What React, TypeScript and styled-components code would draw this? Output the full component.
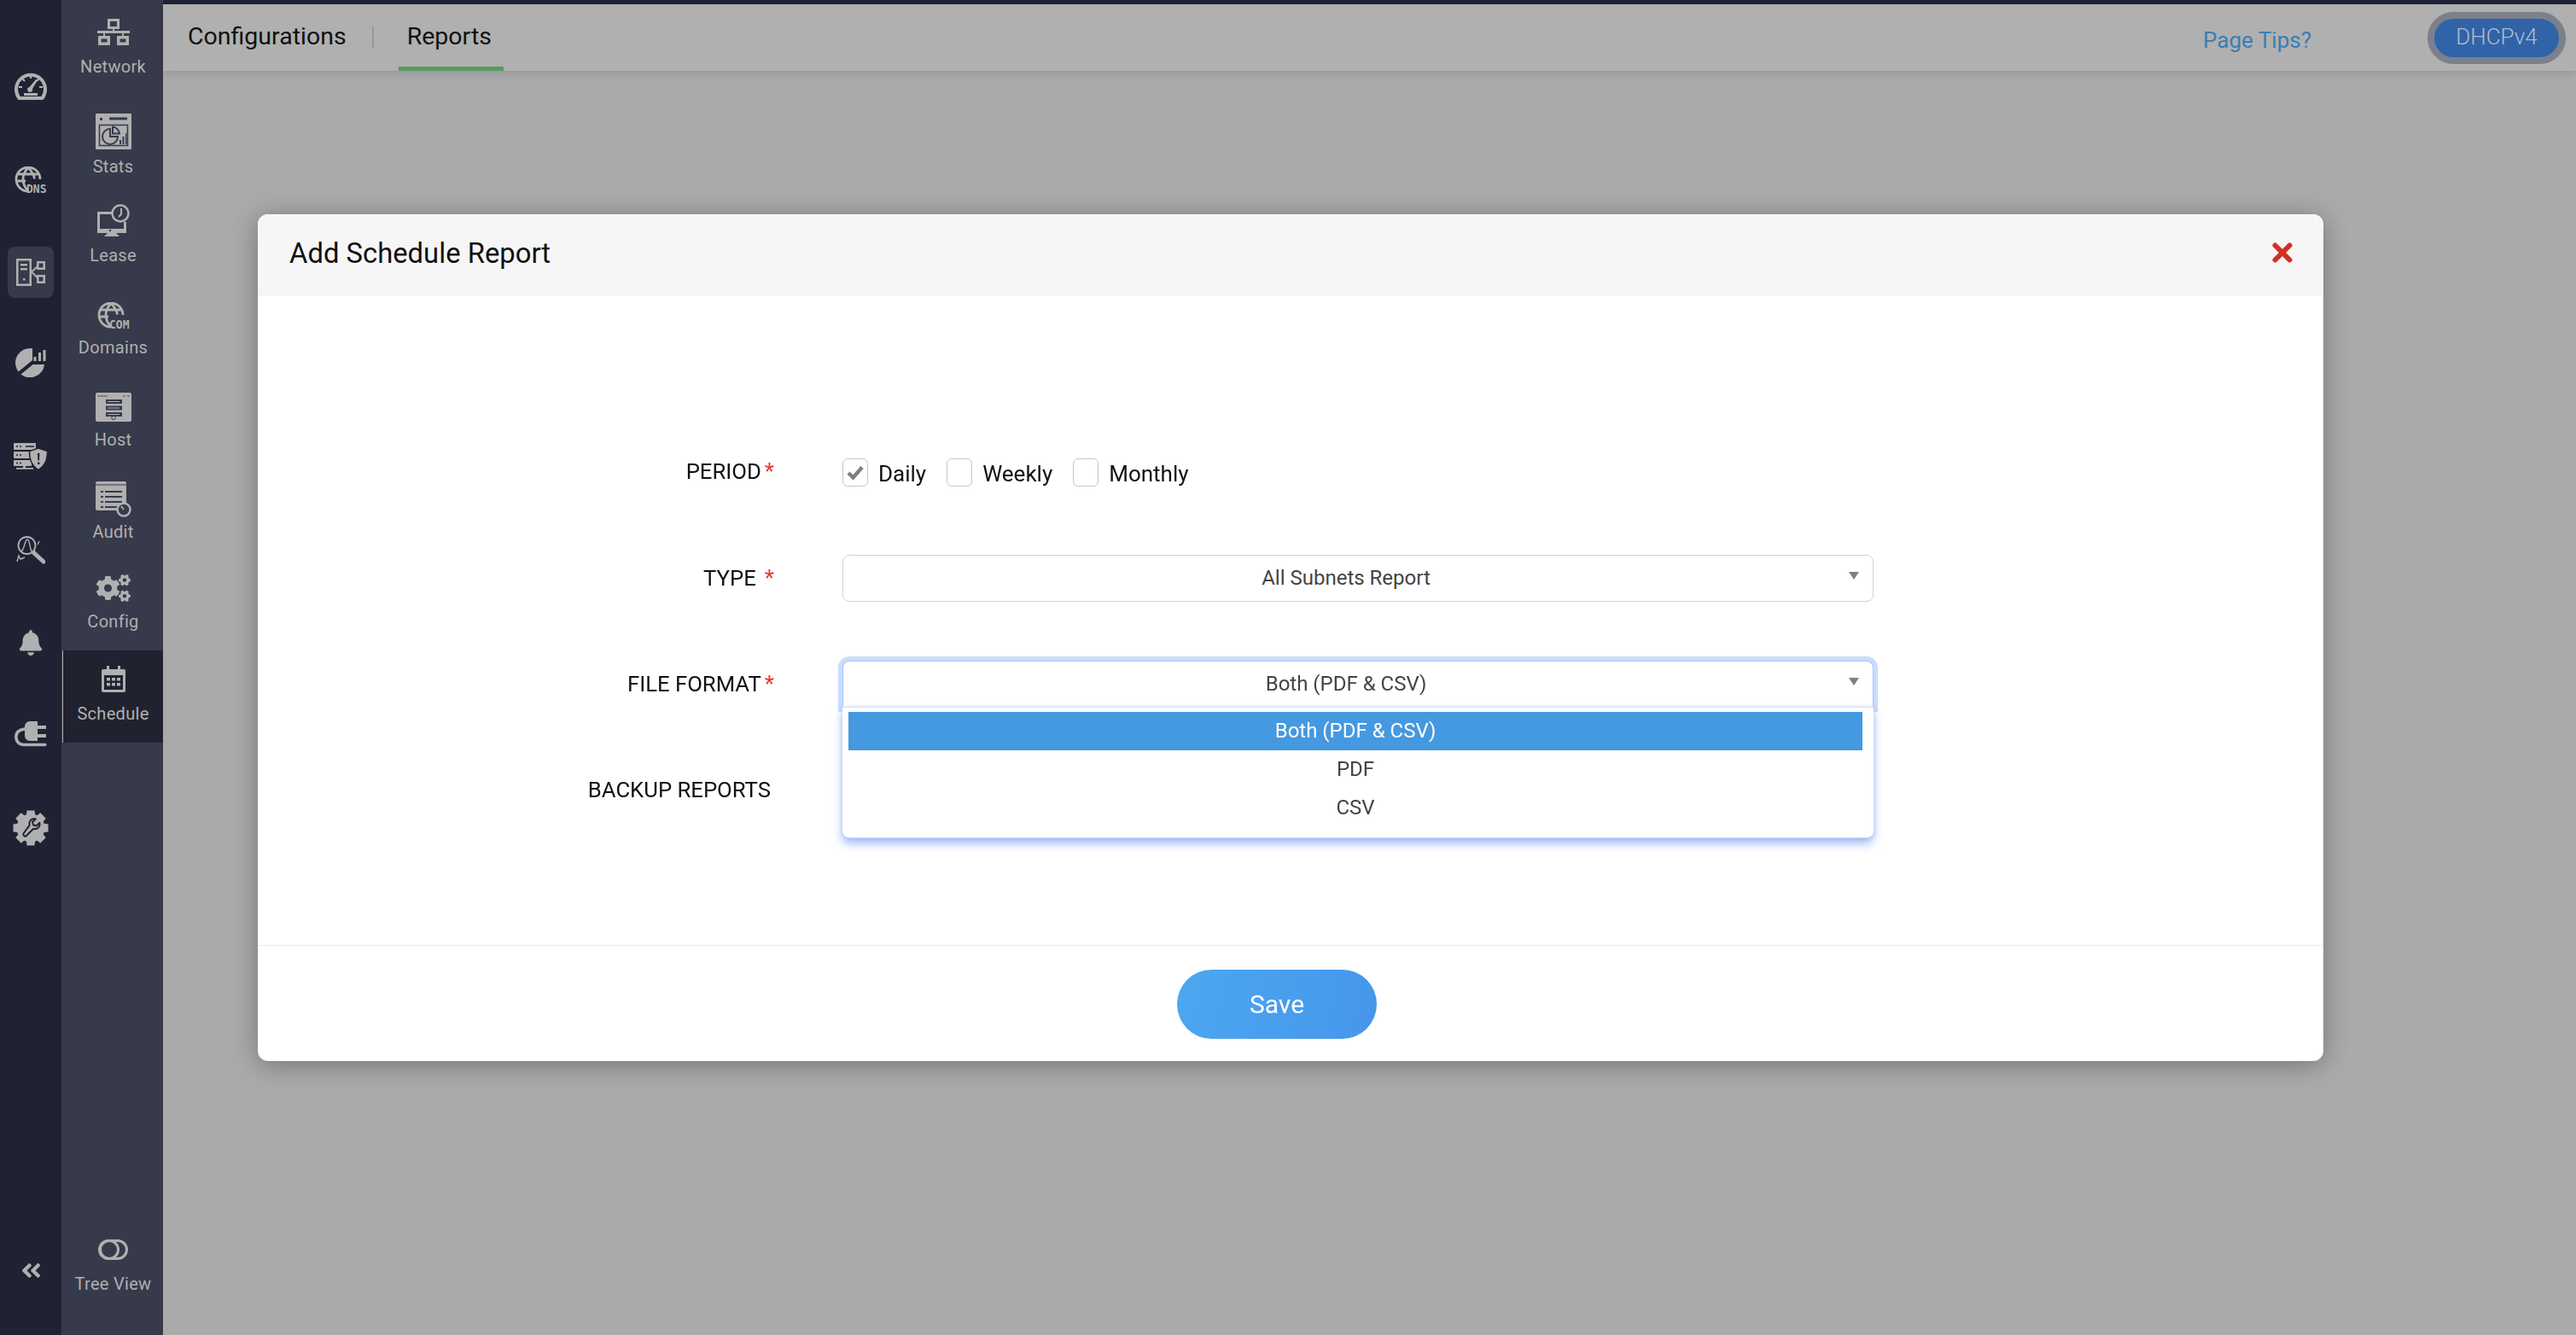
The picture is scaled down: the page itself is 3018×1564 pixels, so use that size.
import React from 'react';
import styled, { createGlobalStyle } from 'styled-components';
import { FaBell, FaCogs, FaAngleDoubleLeft } from 'react-icons/fa';

const GlobalStyle = createGlobalStyle`
  html, body {
    margin: 0;
    height: 100%;
    background: #aaaaaa;
    font-family: Roboto, "Liberation Sans", sans-serif;
  }
  * { box-sizing: border-box; }
`;

const Page = styled.div`
  display: flex;
  height: 1564px;
  overflow: hidden;
`;

const Rail = styled.nav`
  display: flex;
  flex-direction: column;
  align-items: center;
  width: 72px;
  flex: none;
  background: #1f2233;
  color: #b0b0b0;
  padding-top: 70px;
`;

const RailSlot = styled.div<{ $h: number; $active?: boolean }>`
  height: 60px;
  width: 54px;
  flex: none;
  margin-bottom: ${({ $h }) => $h - 60}px;
  display: flex;
  align-items: center;
  justify-content: center;
  border-radius: 8px;
  background: ${({ $active }) => ($active ? '#373a4a' : 'transparent')};
`;

const RailFoot = styled.div`
  margin-top: auto;
  margin-bottom: 62px;
  display: flex;
  font-size: 27px;
`;

const SubNav = styled.nav`
  display: flex;
  flex-direction: column;
  width: 119px;
  flex: none;
  background: #373a4a;
  color: #b0b0b0;
  padding-left: 1px;
`;

const NavItem = styled.div<{ $h: number; $gap: number; $active?: boolean }>`
  height: ${({ $h }) => $h}px;
  flex: none;
  display: flex;
  flex-direction: column;
  align-items: center;
  justify-content: flex-end;
  gap: ${({ $gap }) => $gap}px;
  padding-bottom: 24px;
  background: ${({ $active }) => ($active ? '#20232f' : 'transparent')};
  border-left: 1px solid ${({ $active }) => ($active ? '#b0b0b0' : 'transparent')};
`;

const NavFoot = styled(NavItem)`
  margin-top: auto;
  padding-bottom: 50px;
  height: auto;
`;

const NavLabel = styled.span`
  font-size: 20px;
  line-height: 20px;
  letter-spacing: 0.3px;
  white-space: nowrap;
`;

const Main = styled.div`
  flex: 1;
  display: flex;
  flex-direction: column;
  min-width: 0;
  background: #aaaaaa;
`;

const TopStrip = styled.div`
  height: 5px;
  flex: none;
  background: #1f2338;
`;

const TopBar = styled.header`
  height: 78px;
  flex: none;
  display: flex;
  align-items: center;
  background: #b0b0b0;
  padding-left: 29px;
  box-shadow: 0 2px 12px rgba(0, 0, 0, 0.14);
  position: relative;
`;

const Tab = styled.div<{ $active?: boolean }>`
  height: 100%;
  display: flex;
  align-items: center;
  font-size: 28.5px;
  color: #111;
  padding: 2px ${({ $active }) => ($active ? '14px' : '0')} 0 ${({ $active }) => ($active ? '10px' : '0')};
  border-bottom: 5px solid ${({ $active }) => ($active ? '#559a5f' : 'transparent')};
`;

const TabDivider = styled.div`
  width: 2px;
  height: 26px;
  margin: 0 29px 0 30px;
  background: #999;
`;

const PageTips = styled.a`
  margin-left: auto;
  font-size: 26px;
  color: #3a7eb2;
  margin-right: 136px;
  padding-top: 6px;
`;

const ProtocolPill = styled.div`
  width: 162px;
  height: 61px;
  margin-right: 12px;
  margin-top: 7px;
  margin-bottom: 7px;
  border-radius: 31px;
  border: 8px solid #7c808c;
  background: #3063a8;
  color: #b4bccb;
  font-size: 26px;
  font-weight: 300;
  display: flex;
  align-items: center;
  justify-content: center;
  padding-bottom: 2px;
`;

const Overlay = styled.div`
  position: fixed;
  inset: 0;
  padding: 251px 296px 0 302px;
`;

const Modal = styled.section`
  height: 992px;
  display: flex;
  flex-direction: column;
  background: #fff;
  border-radius: 12px;
  box-shadow: 0 4px 30px rgba(0, 0, 0, 0.32);
`;

const ModalHeader = styled.div`
  height: 95px;
  flex: none;
  display: flex;
  align-items: center;
  justify-content: space-between;
  padding: 0 36px 3px 37px;
  background: #f6f6f6;
  border-bottom: 1px solid #ececec;
  border-radius: 12px 12px 0 0;
`;

const ModalTitle = styled.h2`
  margin: 0;
  font-size: 32.8px;
  font-weight: 400;
  color: #111;
`;

const CloseButton = styled.button`
  display: flex;
  padding: 0;
  margin-bottom: 2px;
  border: 0;
  background: none;
`;

const ModalBody = styled.div`
  flex: 1;
  display: flex;
  flex-direction: column;
  padding-top: 145px;
`;

const Row = styled.div`
  height: 124px;
  flex: none;
  display: grid;
  grid-template-columns: 605px 1208px;
  column-gap: 80px;
  align-items: center;
`;

const Label = styled.label<{ $plain?: boolean; $raised?: boolean }>`
  display: flex;
  justify-content: flex-end;
  align-items: center;
  gap: 4px;
  font-size: 25.7px;
  color: #111;
  padding-right: ${({ $plain }) => ($plain ? '4px' : '0')};
  padding-bottom: ${({ $raised }) => ($raised ? '2px' : '0')};
`;

const Star = styled.span<{ $wide?: boolean }>`
  color: #e8342a;
  font-size: 26px;
  margin-left: ${({ $wide }) => ($wide ? '6px' : '0')};
`;

const Checks = styled.div`
  display: flex;
  align-items: center;
  padding-top: 1px;
`;

const CheckBox = styled.span`
  width: 30px;
  height: 33px;
  flex: none;
  display: flex;
  align-items: center;
  justify-content: center;
  margin-right: 12px;
  border: 1px solid #c4c4c8;
  border-radius: 6px;
  background: #fff;
`;

const CheckLabel = styled.span`
  font-size: 26px;
  color: #111;
  margin-right: 24px;
  padding-top: 3px;
`;

const Control = styled.div`
  position: relative;
`;

const Select = styled.div<{ $open?: boolean }>`
  height: 55px;
  display: flex;
  align-items: center;
  justify-content: center;
  padding-right: 28px;
  font-size: 24px;
  color: #444;
  position: relative;
  background: #fff;
  border: 1px solid ${({ $open }) => ($open ? '#a5c6fb' : '#d2d2d6')};
  border-radius: ${({ $open }) => ($open ? '8px 8px 0 0' : '8px')};
  border-bottom-color: ${({ $open }) => ($open ? '#e0e0e4' : '#d2d2d6')};
  box-shadow: ${({ $open }) => ($open ? '0 0 0 5px #cbdcfd' : 'none')};
`;

const Caret = styled.span`
  position: absolute;
  right: 16px;
  top: 19px;
  width: 0;
  height: 0;
  border-left: 6.5px solid transparent;
  border-right: 6.5px solid transparent;
  border-top: 9px solid #808080;
`;

const Menu = styled.ul`
  position: absolute;
  top: 54px;
  left: 0;
  right: 0;
  z-index: 2;
  margin: 0;
  height: 154px;
  padding: 5px 13px 0 7px;
  list-style: none;
  background: #fff;
  border-radius: 0 0 8px 8px;
  border-top: 1px solid #e0e0e4;
  border-bottom: 1px solid #d8d8dc;
  box-shadow: 0 7px 12px rgba(120, 160, 245, 0.6), 0 2px 6px rgba(120, 160, 245, 0.4);
`;

const MenuOption = styled.li<{ $selected?: boolean }>`
  height: 45px;
  display: flex;
  align-items: center;
  justify-content: center;
  font-size: 24px;
  color: ${({ $selected }) => ($selected ? '#fff' : '#444')};
  background: ${({ $selected }) => ($selected ? '#4599e0' : 'transparent')};
`;

const ModalFooter = styled.div`
  height: 136px;
  flex: none;
  display: flex;
  justify-content: center;
  padding: 28px 32px 0 0;
  border-top: 1px solid #ececec;
`;

const SaveButton = styled.button`
  width: 234px;
  height: 81px;
  border: 0;
  border-radius: 41px;
  background: linear-gradient(100deg, #4ca7f0, #4696ec);
  color: #fff;
  font-family: inherit;
  font-size: 30px;
`;

const C = 'currentColor';
const SUB_BG = '#373a4a';
const RAIL_BG = '#1f2233';

const NetworkIcon = () => (
  <svg width="38" height="31" viewBox="0 0 38 31">
    <path
      fill={C}
      fillRule="evenodd"
      d="M12 0h14v12h-6v2h18v3h-7v3h6v11H23V20h6v-3H9v3h6v11H1V20h6v-3H0v-3h18v-2h-6zM15 3v6h8V3zM4.500 23.500v4h7v-4zM26.500 23.500v4h7v-4z"
    />
  </svg>
);

const StatsIcon = () => (
  <svg width="42" height="42" viewBox="0 0 42 42">
    <rect width="42" height="42" rx="1" fill={C} />
    <rect x="5" y="5" width="3" height="3" fill={SUB_BG} />
    <rect x="16" y="4.500" width="21" height="3" fill={SUB_BG} />
    <rect x="4.500" y="13.500" width="33" height="24" fill="none" stroke={SUB_BG} strokeWidth="1.500" />
    <path fill="none" stroke={SUB_BG} strokeWidth="2" d="M17 18a9 9 0 1 0 9 9h-9zM20 15.500a9 9 0 0 1 8 8h-8z" />
    <path fill={SUB_BG} d="M28 31h2v5h-2zM31.500 27h2v9h-2zM35 23h1.500v13H35z" />
  </svg>
);

const LeaseIcon = () => (
  <svg width="38" height="38" viewBox="0 0 38 38">
    <path fill={C} fillRule="evenodd" d="M0 9h17v3H3v17h28v-8h3v13H0zM12 34h10l4 4H8z" />
    <circle cx="27" cy="11" r="9.500" fill={SUB_BG} stroke={C} strokeWidth="2.500" />
    <path d="M28 5v7l-3 3" fill="none" stroke={C} strokeWidth="2" />
    <circle cx="15" cy="31" r="1.200" fill={SUB_BG} />
  </svg>
);

const GlobeLines = () => (
  <path
    fill="none"
    stroke={C}
    strokeWidth="2.800"
    d="M16 29A14 14 0 1 1 30 15M16 1.500c-8 8-8 19 0 27M16 1.500c6 6 7 10 7.500 13M3 9h26M2 17h11"
  />
);

const GlobeText = styled.text`
  font-family: "DejaVu Sans Mono", monospace;
  font-weight: 700;
  font-size: 14px;
  fill: currentColor;
`;

const DnsIcon = () => (
  <svg width="38" height="32" viewBox="0 0 38 32">
    <GlobeLines />
    <GlobeText x="14" y="30.500" textLength="23.500" lengthAdjust="spacingAndGlyphs">DNS</GlobeText>
  </svg>
);

const DomainIcon = () => (
  <svg width="38" height="32" viewBox="0 0 38 32">
    <GlobeLines />
    <GlobeText x="14" y="30.500" textLength="23.500" lengthAdjust="spacingAndGlyphs">COM</GlobeText>
  </svg>
);

const GaugeIcon = () => (
  <svg width="38" height="33" viewBox="0 0 38 33">
    <path fill="none" stroke={C} strokeWidth="4" d="M5.500 31A17 17 0 1 1 32.500 31z" />
    <path fill={C} d="M11 25h16v3H11zM25 9l2 1-6 10a3 3 0 1 1-3.500-2z" />
    <path stroke={C} strokeWidth="2.200" d="M19 4v4M9.500 8.500l2.500 2.500M5 18h4M28.500 8.500L26 11M33 18h-4" />
  </svg>
);

const ServerTreeIcon = () => (
  <svg width="34" height="32" viewBox="0 0 34 32">
    <path fill={C} fillRule="evenodd" d="M0 0h18v32H0zM2.500 2.500v27h13v-27z" />
    <path fill={C} d="M5 6h8v2.500H5zM5 11h8v2.500H5zM8 23h2.500v2.500H8z" />
    <path fill={C} fillRule="evenodd" d="M24 3h10v10H24zM26.500 5.500v5h5v-5zM24 19h10v10H24zM26.500 21.500v5h5v-5z" />
    <path fill="none" stroke={C} strokeWidth="2" d="M25 9l-7 6.500 7 7" />
  </svg>
);

const PieBarsIcon = () => (
  <svg width="36" height="34" viewBox="0 0 36 34">
    <path fill={C} d="M20 .3A17 17 0 0 0 3.500 27.400L20 14z" />
    <path fill={C} d="M34 19A17 17 0 0 1 6.500 30.400L20.500 19z" />
    <path fill={C} d="M21.500 10h3v5h-3zM27 5h3v10h-3zM32.500 2h3v13h-3z" />
  </svg>
);

const HostIcon = () => (
  <svg width="42" height="34" viewBox="0 0 42 34">
    <path
      fill={C}
      fillRule="evenodd"
      d="M2 0h38a2 2 0 0 1 2 2v30a2 2 0 0 1-2 2H2a2 2 0 0 1-2-2V2a2 2 0 0 1 2-2zM12 8v5h19V8zM12 15.500v5h19v-5zM12 23v5h19v-5z"
    />
    <path stroke={SUB_BG} strokeWidth="0.800" d="M2 4h12M32 4h3M37 4h3" />
    <path stroke={C} strokeWidth="1" d="M14 10.500h14M14 18h14M14 25.500h14" />
    <circle cx="21" cy="29.500" r="2.200" fill={C} stroke={SUB_BG} strokeWidth="1" />
  </svg>
);

const AuditIcon = () => (
  <svg width="42" height="42" viewBox="0 0 42 42">
    <path fill={C} d="M2 0h32a2 2 0 0 1 2 2v32H2a2 2 0 0 1-2-2V2a2 2 0 0 1 2-2z" />
    <path stroke={SUB_BG} strokeWidth="1" d="M0 4h36" />
    <path stroke={SUB_BG} strokeWidth="2" d="M6 12h3M11 12h20M6 18h3M11 18h20M6 24h3M11 24h20M6 30h3M11 30h16" />
    <circle cx="33" cy="33" r="7.500" fill={SUB_BG} stroke={C} strokeWidth="2.500" />
    <path d="M30 29l3 4" stroke={C} strokeWidth="1.800" />
  </svg>
);

const CalendarIcon = () => (
  <svg width="28" height="31" viewBox="0 0 28 31">
    <path
      fill={C}
      fillRule="evenodd"
      d="M6 0h3v4h10V0h3v4h4a2 2 0 0 1 2 2v23a2 2 0 0 1-2 2H2a2 2 0 0 1-2-2V6a2 2 0 0 1 2-2h4zM3 11v17h22V11z"
    />
    <path fill={C} d="M6 14h4v3.500H6zM12 14h4v3.500h-4zM18 14h4v3.500h-4zM6 20h4v3.500H6zM12 20h4v3.500h-4zM18 20h4v3.500h-4z" />
  </svg>
);

const ToggleIcon = () => (
  <svg width="35" height="24" viewBox="0 0 35 24">
    <rect x="1.500" y="1.500" width="32" height="21" rx="10.500" fill="none" stroke={C} strokeWidth="3" />
    <circle cx="13" cy="12" r="10.500" fill="none" stroke={C} strokeWidth="3" />
  </svg>
);

const ServerShieldIcon = () => (
  <svg width="40" height="32" viewBox="0 0 40 32">
    <path
      fill={C}
      d="M1 0h25v8H1a1 1 0 0 1-1-1V1a1 1 0 0 1 1-1zM1 10h22v8H1a1 1 0 0 1-1-1v-6a1 1 0 0 1 1-1zM1 20h20v7H1a1 1 0 0 1-1-1v-5a1 1 0 0 1 1-1zM11 27h3v2h9v1.800H3V29h8z"
    />
    <path stroke={RAIL_BG} strokeWidth="1.500" d="M3 4h2M7 4h2M14 4h10M3 14h2M7 14h2M3 23.500h2M7 23.500h2" />
    <path fill={C} stroke={RAIL_BG} strokeWidth="1.500" d="M29 6l10.500 3.500c0 11-3 17-10.500 22-7.500-5-10.500-11-10.500-22z" />
    <path fill={RAIL_BG} d="M28 12h2.400l-.4 8.500h-1.600zM28 22.500h2.400V25H28z" />
  </svg>
);

const SearchWaveIcon = () => (
  <svg width="34" height="34" viewBox="0 0 34 34">
    <circle cx="12.500" cy="11" r="10" fill="none" stroke={C} strokeWidth="1.800" />
    <path d="M6 18C10 15 10 4 13 4s3 11 5 14" fill="none" stroke={C} strokeWidth="1.400" />
    <path d="M1 30l2-7 2 4 5-2" fill="none" stroke={C} strokeWidth="1.400" />
    <path d="M25 10l2-4" stroke={C} strokeWidth="1.400" />
    <path d="M21 20l11 10" stroke={C} strokeWidth="5" strokeLinecap="round" />
    <path d="M20 19l2-2" stroke={C} strokeWidth="1.800" />
  </svg>
);

const PlugIcon = () => (
  <svg width="38" height="30" viewBox="0 0 38 30">
    <path fill={C} d="M18 0h9v5h10v4H27v6h10v4H27v4h-9a6 6 0 0 1-6-6V6a6 6 0 0 1 6-6z" />
    <path
      fill="none"
      stroke={C}
      strokeWidth="3.500"
      strokeLinecap="round"
      d="M12 9C5 10 1.800 13 1.800 18c0 6 4 9.500 9 9.500h25"
    />
  </svg>
);

const GearWrenchIcon = () => (
  <svg width="42" height="42" viewBox="0 0 42 42">
    <circle cx="21" cy="21" r="16.500" fill={C} />
    {[0, 45, 90, 135, 180, 225, 270, 315].map((angle) => (
      <path key={angle} fill={C} transform={`rotate(${angle} 21 21)`} d="M16.500 0.500h9l1 8h-11z" />
    ))}
    <path
      fill={C}
      stroke={RAIL_BG}
      strokeWidth="2"
      strokeLinejoin="round"
      d="M12.500 27.500a2.300 2.300 0 0 0 3 3l8.500-8.500c3.500 1 7-1 7.500-4.500.2-1 0-2-.2-2.500l-3.800 3.500-3.500-1-1-3.500 3.800-3.500c-.8-.3-1.800-.4-2.800-.2-3.500.5-5.500 4-4.500 7.500z"
    />
  </svg>
);

const checkMark = (
  <svg width="20" height="18" viewBox="0 0 20 18">
    <path d="M2 9l5.500 5.500L18 2.500" fill="none" stroke="#808080" strokeWidth="4.500" />
  </svg>
);

const railItems = [
  { icon: <GaugeIcon />, h: 111 },
  { icon: <DnsIcon />, h: 108 },
  { icon: <ServerTreeIcon />, h: 106, active: true },
  { icon: <PieBarsIcon />, h: 110 },
  { icon: <ServerShieldIcon />, h: 110 },
  { icon: <SearchWaveIcon />, h: 108 },
  { icon: <FaBell size={30} />, h: 107 },
  { icon: <PlugIcon />, h: 110 },
  { icon: <GearWrenchIcon />, h: 60 },
];

const navItems = [
  { label: 'Network', icon: <NetworkIcon />, h: 112, gap: 15 },
  { label: 'Stats', icon: <StatsIcon />, h: 117, gap: 10 },
  { label: 'Lease', icon: <LeaseIcon />, h: 104, gap: 12 },
  { label: 'Domains', icon: <DomainIcon />, h: 108, gap: 11 },
  { label: 'Host', icon: <HostIcon />, h: 108, gap: 11 },
  { label: 'Audit', icon: <AuditIcon />, h: 108, gap: 7 },
  { label: 'Config', icon: <FaCogs size={40} />, h: 105, gap: 9 },
  { label: 'Schedule', icon: <CalendarIcon />, h: 108, gap: 15, active: true },
];

const App: React.FC = () => {
  return (
    <Page>
      <GlobalStyle />
      <Rail>
        {railItems.map((item, i) => (
          <RailSlot key={i} $h={item.h} $active={item.active}>
            {item.icon}
          </RailSlot>
        ))}
        <RailFoot>
          <FaAngleDoubleLeft />
        </RailFoot>
      </Rail>
      <SubNav>
        {navItems.map((item) => (
          <NavItem key={item.label} $h={item.h} $gap={item.gap} $active={item.active}>
            {item.icon}
            <NavLabel>{item.label}</NavLabel>
          </NavItem>
        ))}
        <NavFoot $h={0} $gap={18}>
          <ToggleIcon />
          <NavLabel>Tree View</NavLabel>
        </NavFoot>
      </SubNav>
      <Main>
        <TopStrip />
        <TopBar>
          <Tab>Configurations</Tab>
          <TabDivider />
          <Tab $active>Reports</Tab>
          <PageTips>Page Tips?</PageTips>
          <ProtocolPill>DHCPv4</ProtocolPill>
        </TopBar>
      </Main>
      <Overlay>
        <Modal>
          <ModalHeader>
            <ModalTitle>Add Schedule Report</ModalTitle>
            <CloseButton aria-label="Close">
              <svg width="24" height="24" viewBox="0 0 24 24">
                <path d="M3.500 3.500l17 17M20.500 3.500l-17 17" stroke="#d13024" strokeWidth="6" strokeLinecap="round" />
              </svg>
            </CloseButton>
          </ModalHeader>
          <ModalBody>
            <Row>
              <Label $raised>PERIOD<Star>*</Star></Label>
              <Checks>
                <CheckBox>{checkMark}</CheckBox>
                <CheckLabel>Daily</CheckLabel>
                <CheckBox />
                <CheckLabel>Weekly</CheckLabel>
                <CheckBox />
                <CheckLabel>Monthly</CheckLabel>
              </Checks>
            </Row>
            <Row>
              <Label>TYPE<Star $wide>*</Star></Label>
              <Control>
                <Select>All Subnets Report<Caret /></Select>
              </Control>
            </Row>
            <Row>
              <Label>FILE FORMAT<Star>*</Star></Label>
              <Control>
                <Select $open>Both (PDF &amp; CSV)<Caret /></Select>
                <Menu>
                  <MenuOption $selected>Both (PDF &amp; CSV)</MenuOption>
                  <MenuOption>PDF</MenuOption>
                  <MenuOption>CSV</MenuOption>
                </Menu>
              </Control>
            </Row>
            <Row>
              <Label $plain>BACKUP REPORTS</Label>
            </Row>
          </ModalBody>
          <ModalFooter>
            <SaveButton>Save</SaveButton>
          </ModalFooter>
        </Modal>
      </Overlay>
    </Page>
  );
};

export default App;
